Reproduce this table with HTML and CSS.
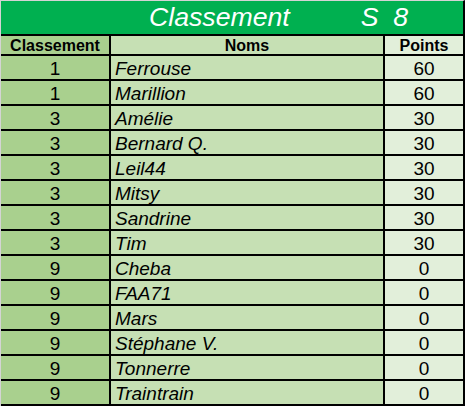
FILE: index.html
```html
<!DOCTYPE html>
<html lang="fr">
<head>
<meta charset="utf-8">
<title>Classement S 8</title>
<link rel="stylesheet" href="styles.css">
</head>
<body>
<div class="sheet">
  <div class="title"><span class="t-main">Classement</span><span class="t-week">S  8</span></div>
  <div class="grid">
    <div class="c1 head">Classement</div>
    <div class="c2 head">Noms</div>
    <div class="c3 head">Points</div>

    <div class="c1">1</div><div class="c2 name">Ferrouse</div><div class="c3">60</div>
    <div class="c1">1</div><div class="c2 name">Marillion</div><div class="c3">60</div>
    <div class="c1">3</div><div class="c2 name">Amélie</div><div class="c3">30</div>
    <div class="c1">3</div><div class="c2 name">Bernard Q.</div><div class="c3">30</div>
    <div class="c1">3</div><div class="c2 name">Leil44</div><div class="c3">30</div>
    <div class="c1">3</div><div class="c2 name">Mitsy</div><div class="c3">30</div>
    <div class="c1">3</div><div class="c2 name">Sandrine</div><div class="c3">30</div>
    <div class="c1">3</div><div class="c2 name">Tim</div><div class="c3">30</div>
    <div class="c1">9</div><div class="c2 name">Cheba</div><div class="c3">0</div>
    <div class="c1">9</div><div class="c2 name">FAA71</div><div class="c3">0</div>
    <div class="c1">9</div><div class="c2 name">Mars</div><div class="c3">0</div>
    <div class="c1">9</div><div class="c2 name">Stéphane V.</div><div class="c3">0</div>
    <div class="c1">9</div><div class="c2 name">Tonnerre</div><div class="c3">0</div>
    <div class="c1">9</div><div class="c2 name">Traintrain</div><div class="c3">0</div>
  </div>
</div>
</body>
</html>
```

FILE: styles.css
```css
html, body {
  margin: 0;
  padding: 0;
  background: #ffffff;
}

.sheet {
  width: 466px;
  height: 406px;
  font-family: "Liberation Sans", Arial, sans-serif;
  color: #000;
}

.title {
  box-sizing: border-box;
  width: 465px;
  height: 34px;
  border-top: 1px solid #d4d4d4;
  border-left: 1px solid #d4d4d4;
  border-right: 2px solid #000;
  background: #00b050;
  color: #ffffff;
  font-style: italic;
  font-size: 26.67px;
  line-height: 33px;
  display: flex;
  padding-left: 148px;
  white-space: pre;
}

.t-week {
  margin-left: 71px;
}

.grid {
  box-sizing: border-box;
  width: 465px;
  display: grid;
  grid-template-columns: 108px 272px 78px;
  grid-template-rows: 18px;
  grid-auto-rows: 23px;
  gap: 2px;
  padding: 2px 2px 2px 0;
  border-left: 1px solid #d4d4d4;
  background: #000;
  font-size: 19px;
}

.grid > div {
  display: flex;
  align-items: center;
  justify-content: center;
  line-height: 1;
  white-space: nowrap;
  padding-top: 1px;
}

.c1 { background: #a9d08e; }
.c2 { background: #c6e0b4; }
.c3 { background: #e2efda; }

.head {
  font-weight: bold;
  font-size: 16px;
}

.grid > .name {
  justify-content: flex-start;
  padding-left: 4px;
  font-style: italic;
}
```
